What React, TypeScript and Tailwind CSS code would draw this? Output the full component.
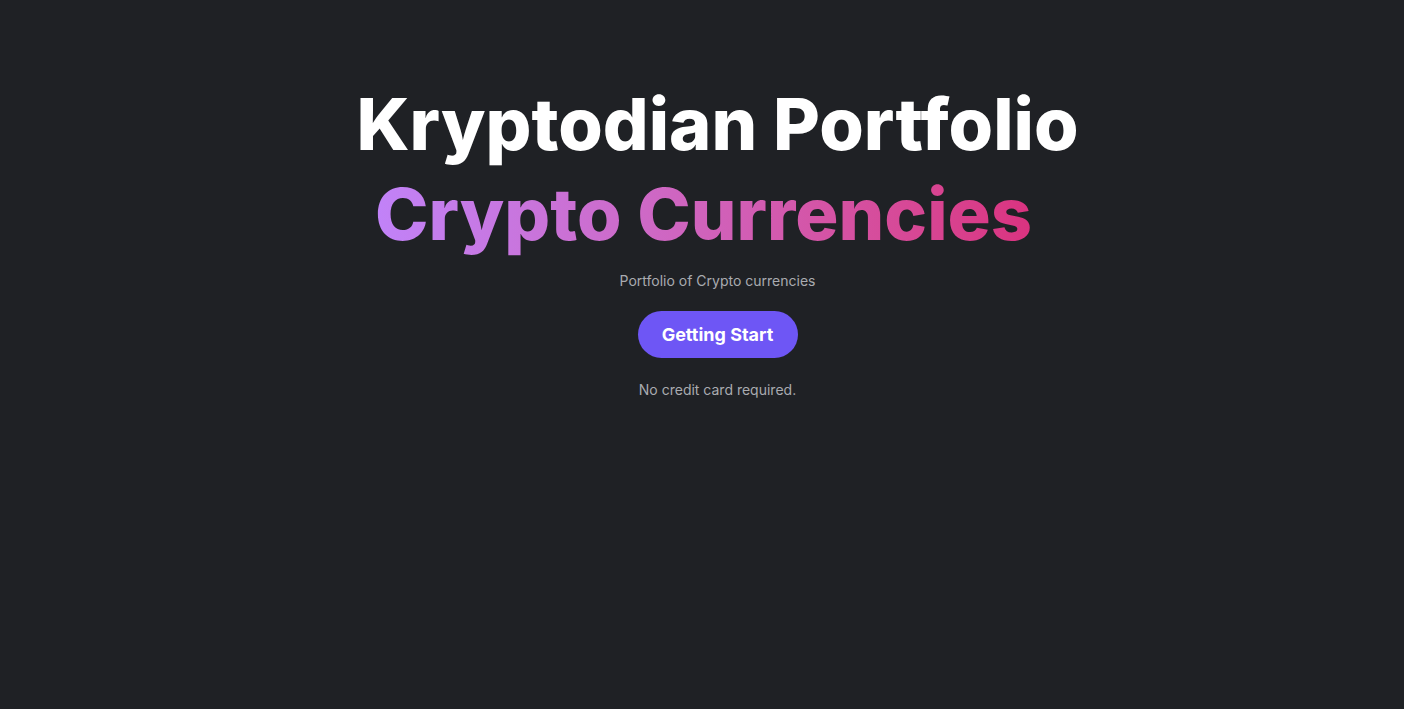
import React from "react";

export default function App() {
  return (
    <div
      className="min-h-[709px] w-full bg-[#1f2125] flex flex-col items-center pl-[31px]"
      style={{ fontFamily: "Inter, 'Noto Sans', sans-serif" }}
    >
      <h1 className="mt-[79px] text-center text-[72px] leading-[90px] font-extrabold text-white">
        Kryptodian Portfolio
        <span className="block pr-[28px] bg-gradient-to-r from-[#c084fc] to-[#db2777] bg-clip-text text-transparent">
          <span>Crypto Currencies</span>
        </span>
      </h1>
      <p className="mt-[12px] text-[14px] leading-[20px] text-[#a9abb0]">Portfolio of Crypto currencies</p>
      <button className="mt-[20px] h-[47px] w-[160px] rounded-full bg-[#6e56f5] text-[18px] font-bold text-white">
        Getting Start
      </button>
      <p className="mt-[22px] text-[14px] leading-[20px] text-[#a9abb0]">No credit card required.</p>
    </div>
  );
}
